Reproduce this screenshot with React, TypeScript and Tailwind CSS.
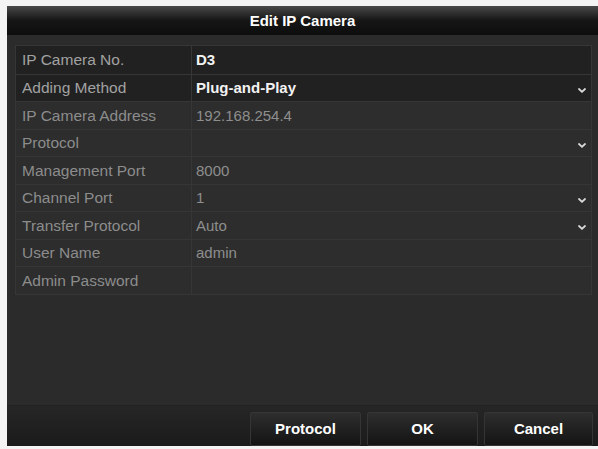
import React from "react"

type Row = { label: string; value: string; active?: boolean; select?: boolean }

const rows: Row[] = [
  { label: "IP Camera No.", value: "D3", active: true },
  { label: "Adding Method", value: "Plug-and-Play", active: true, select: true },
  { label: "IP Camera Address", value: "192.168.254.4" },
  { label: "Protocol", value: "", select: true },
  { label: "Management Port", value: "8000" },
  { label: "Channel Port", value: "1", select: true },
  { label: "Transfer Protocol", value: "Auto", select: true },
  { label: "User Name", value: "admin" },
  { label: "Admin Password", value: "" },
]

function Chevron() {
  return (
    <svg width="8" height="5" viewBox="0 0 8 5" className="shrink-0 mt-[5px]">
      <path d="M1 1 L4 3.8 L7 1" stroke="#d8d8d8" strokeWidth="1.8" fill="none" strokeLinecap="round" />
    </svg>
  )
}

export default function App() {
  return (
    <div
      className="w-[598px] h-[449px] bg-[#f4f4f4] pl-[7px] pt-[6px] pb-[3px] overflow-hidden"
      style={{ fontFamily: '"Liberation Sans", Arial, sans-serif' }}
    >
      <div className="h-full flex flex-col bg-[#2b2b2b]">
        {/* title bar */}
        <div className="h-[29px] shrink-0 flex items-center justify-center bg-gradient-to-b from-[#4a4a4a] via-[#161616] to-[#0d0d0d]">
          <span className="text-white font-bold text-[15px] leading-none">Edit IP Camera</span>
        </div>

        {/* form */}
        <div className="flex-1 pl-[8px] pr-[6px] pt-[10px]">
          <div className="border border-[#363636]">
            {rows.map((r, i) => (
              <div
                key={r.label}
                className={`h-[27.5px] flex ${i > 0 ? "border-t border-[#363636]" : ""} ${r.active ? "bg-[#212121]" : "bg-[#2d2d2d]"}`}
              >
                <div className="w-[176px] shrink-0 flex items-center pl-[6px] border-r border-[#363636]">
                  <span className={`text-[15.5px] leading-none ${r.active ? "text-[#a2a2a2]" : "text-[#8c8c8c]"}`}>{r.label}</span>
                </div>
                <div className="flex-1 flex items-center pl-[4px] pr-[5px]">
                  <span className={`flex-1 text-[15px] leading-none ${r.active ? "text-[#f2f2f2] font-bold" : "text-[#8e8e8e]"}`}>{r.value}</span>
                  {r.select && <Chevron />}
                </div>
              </div>
            ))}
          </div>
        </div>

        {/* footer */}
        <div className="h-[41px] shrink-0 flex items-start justify-end gap-[6px] pt-[6px] pr-[5px] bg-gradient-to-b from-[#262626] to-[#1b1b1b] border-t border-[#222]">
          {["Protocol", "OK", "Cancel"].map((b, i) => (
            <button
              key={b}
              className={`${i === 2 ? "w-[109px]" : "w-[111px]"} h-[34px] flex items-center justify-center rounded-[2px] border border-[#353535] bg-gradient-to-b from-[#2e2e2e] to-[#141414] text-white font-bold text-[15px]`}
            >
              {b}
            </button>
          ))}
        </div>
      </div>
    </div>
  )
}
